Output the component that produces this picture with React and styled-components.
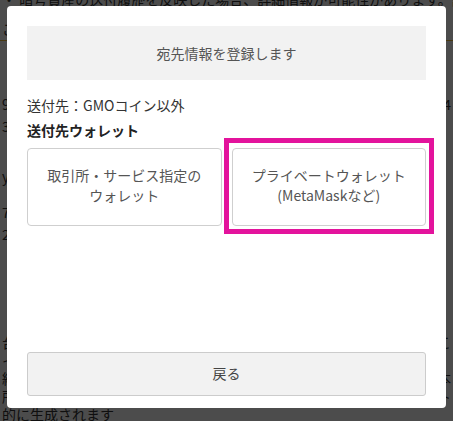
import styled, { createGlobalStyle } from "styled-components";

const GlobalStyle = createGlobalStyle`
  html, body { margin: 0; padding: 0; }
  body {
    font-family: "Noto Sans CJK JP", "Noto Sans", sans-serif;
    background: #ffffff;
    overflow: hidden;
  }
`;

const Page = styled.div`
  width: 453px;
  height: 421px;
  position: relative;
  overflow: hidden;
  background: #fff;
  color: #333;
  font-size: 14px;
  line-height: 22px;
`;

const PageLine = styled.p`
  margin: 0;
  margin-top: ${(p) => p.$top || 0}px;
  padding: 0 2px;
  white-space: nowrap;
  line-height: ${(p) => p.$lh || 22}px;
  border-bottom: ${(p) => (p.$rule ? "1px solid #f0c040" : "none")};
  display: flex;
  justify-content: space-between;
`;

const Overlay = styled.div`
  position: absolute;
  inset: 0;
  background: rgba(0, 0, 0, 0.7);
  padding: 6px 7px 13px 7px;
  display: flex;
  align-items: flex-start;
`;

const Modal = styled.div`
  width: 439px;
  height: 402px;
  box-sizing: border-box;
  background: #fff;
  border-radius: 4px;
  padding: 20px 20px 12px;
  display: flex;
  flex-direction: column;
`;

const Header = styled.div`
  height: 54px;
  background: #f2f2f2;
  color: #555;
  font-size: 14px;
  display: flex;
  align-items: center;
  justify-content: center;
`;

const Info = styled.div`
  margin-top: 15px;
  font-size: 14px;
  line-height: 20px;
  color: #333;
`;

const Label = styled.div`
  margin-top: 5px;
  font-size: 14px;
  line-height: 20px;
  font-weight: bold;
  color: #222;
`;

const Choices = styled.div`
  margin-top: 8px;
  display: grid;
  grid-template-columns: 1fr 1fr;
  gap: 10px;
`;

const Choice = styled.button`
  position: relative;
  height: 78px;
  background: #fff;
  border: 1px solid #cfcfcf;
  border-radius: 4px;
  font-family: inherit;
  font-size: 14px;
  line-height: 20px;
  color: #555;
  text-align: center;
  padding: 0 0 5px;
  cursor: pointer;
`;

const Highlight = styled.span`
  position: absolute;
  left: -9px;
  top: -11px;
  right: -9px;
  bottom: -9px;
  border: 5px solid #e3139c;
  pointer-events: none;
`;

const Spacer = styled.div`
  flex: 1;
`;

const BackButton = styled.button`
  height: 44px;
  background: #f2f2f2;
  border: 1px solid #cccccc;
  border-radius: 3px;
  font-family: inherit;
  font-size: 14px;
  color: #444;
  padding: 0 0 3px;
  cursor: pointer;
`;

const App = () => {
  return (
    <>
      <GlobalStyle />
      <Page>
        <PageLine $top={-12}>
          <span>・ 暗号資産の送付履歴を反映した場合、詳細情報が可能性があります。詳</span>
        </PageLine>
        <PageLine $top={8} $rule>
          <span>こ</span>
        </PageLine>
        <PageLine $top={52}>
          <span>9日</span>
          <span>24</span>
        </PageLine>
        <PageLine>
          <span>3</span>
        </PageLine>
        <PageLine $top={28}>
          <span>y</span>
        </PageLine>
        <PageLine $top={14}>
          <span>74</span>
        </PageLine>
        <PageLine>
          <span>23</span>
        </PageLine>
        <PageLine $top={88} $lh={18}>
          <span>台</span>
          <span>こ</span>
        </PageLine>
        <PageLine $lh={18}>
          <span>イ</span>
        </PageLine>
        <PageLine $lh={18}>
          <span>練</span>
          <span>本</span>
        </PageLine>
        <PageLine $lh={18}>
          <span>所</span>
          <span>ト</span>
        </PageLine>
        <PageLine $lh={18}>
          <span>的に生成されます</span>
        </PageLine>
        <Overlay>
          <Modal>
            <Header>宛先情報を登録します</Header>
            <Info>送付先：GMOコイン以外</Info>
            <Label>送付先ウォレット</Label>
            <Choices>
              <Choice>
                取引所・サービス指定の
                <br />
                ウォレット
              </Choice>
              <Choice>
                プライベートウォレット
                <br />
                (MetaMaskなど)
                <Highlight />
              </Choice>
            </Choices>
            <Spacer />
            <BackButton>戻る</BackButton>
          </Modal>
        </Overlay>
      </Page>
    </>
  );
};

export default App;
